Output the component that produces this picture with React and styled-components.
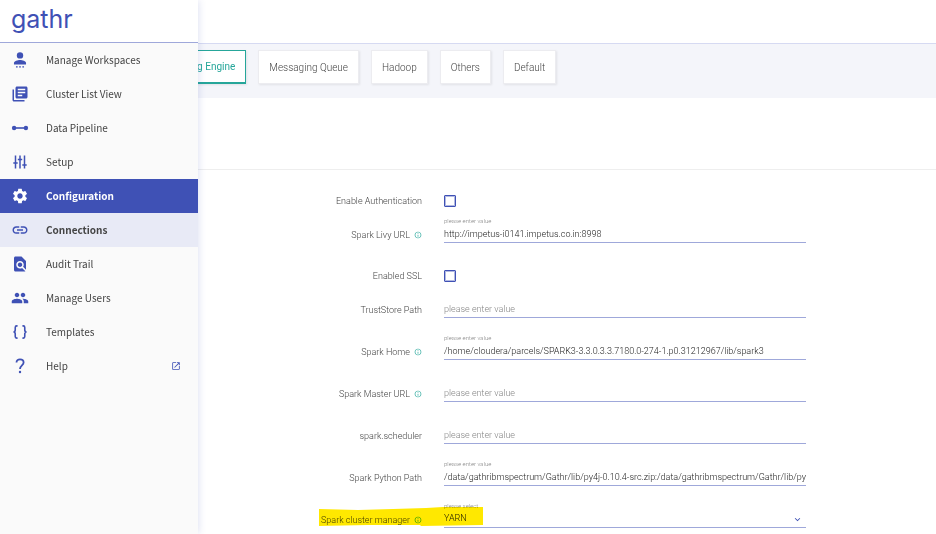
import React, { useState } from 'react';
import styled, { createGlobalStyle, css } from 'styled-components';
import {
  MdSettings,
  MdLink,
  MdFindInPage,
  MdPeople,
  MdLibraryBooks,
  MdOpenInNew,
  MdExpandMore,
  MdOutlineInfo,
} from 'react-icons/md';

const colors = {
  primary: '#3f51b5',
  primaryLight: '#e8eaf6',
  line: '#9fa8da',
  teal: '#26a69a',
  text: '#444444',
  muted: '#858585',
};

const GlobalStyle = createGlobalStyle`
  * {
    box-sizing: border-box;
  }
  body {
    margin: 0;
    background: #ffffff;
    color: ${colors.text};
    font-family: Roboto, "Liberation Sans", sans-serif;
    font-weight: 300;
  }
`;

const Page = styled.div`
  position: relative;
  min-height: 100vh;
`;

/* Side menu, opened over the page */
const Sidebar = styled.aside`
  position: absolute;
  top: 0;
  bottom: 0;
  left: 0;
  z-index: 2;
  width: 198px;
  background: #fafafa;
  box-shadow: 0 0 8px rgba(63, 81, 181, 0.2);
`;

const Brand = styled.div`
  height: 43px;
  padding-left: 11px;
  background: #ffffff;
  border-bottom: 1px solid ${colors.line};
  color: ${colors.primary};
  font-family: Inter, sans-serif;
  font-weight: 400;
  font-size: 25px;
  line-height: 38px;
`;

const Menu = styled.nav`
  display: flex;
  flex-direction: column;
`;

const activeItem = css`
  background: ${colors.primary};
  color: #ffffff;
  font-weight: 700;
`;

const currentItem = css`
  background: ${colors.primaryLight};
  font-weight: 700;
`;

const MenuItem = styled.a`
  display: flex;
  align-items: center;
  gap: 17px;
  height: 34px;
  padding: 0 17px 0 11px;
  color: ${colors.text};
  font-family: "Noto Sans CJK SC", sans-serif;
  font-weight: 400;
  font-size: 10px;
  text-decoration: none;
  ${(props) => props.$state === 'active' && activeItem}
  ${(props) => props.$state === 'current' && currentItem}
`;

const MenuIcon = styled.span`
  display: flex;
  color: ${(props) => (props.$light ? '#ffffff' : colors.primary)};
`;

const MenuText = styled.span`
  flex: 1;
  padding-bottom: 2px;
`;

const Header = styled.header`
  height: 44px;
  border-bottom: 1px solid #d6daf2;
`;

const Tabs = styled.div`
  display: flex;
  gap: 12px;
  height: 54px;
  padding: 6px 0 0 142px;
  background: #f4f5fa;
`;

const Tab = styled.button`
  height: 34px;
  padding: 0 10px;
  background: #ffffff;
  border: 1px solid ${(props) => (props.$active ? colors.teal : '#ececf0')};
  border-bottom-width: ${(props) => (props.$active ? '2px' : '1px')};
  box-shadow: 1px 1px 2px rgba(0, 0, 0, 0.08);
  color: ${(props) => (props.$active ? colors.teal : colors.text)};
  font: inherit;
  font-weight: ${(props) => (props.$active ? 400 : 300)};
  font-size: 10px;
  white-space: nowrap;
`;

const Panel = styled.div`
  height: 72px;
  border-bottom: 1px solid #eeeeee;
`;

const Form = styled.form`
  padding-top: 7px;
`;

const Row = styled.div`
  position: relative;
  display: grid;
  grid-template-columns: 422fr 362fr 108fr;
  column-gap: 22px;
  align-items: end;
  padding: 7px 0 9px;
  &:last-child {
    padding-bottom: 0;
  }
`;

const CheckRow = styled(Row)`
  align-items: center;
  padding: 16px 0 1px;
`;

const Label = styled.label`
  display: flex;
  justify-content: flex-end;
  align-items: center;
  gap: 4px;
  font-size: 9px;
  line-height: 16px;
`;

const Field = styled.div`
  position: relative;
  display: flex;
  flex-direction: column;
  justify-content: flex-end;
  height: 26px;
`;

const Hint = styled.span`
  color: ${colors.muted};
  font-size: 6px;
  line-height: 8px;
`;

const control = css`
  width: 100%;
  height: 18px;
  padding: 0;
  background: transparent;
  border: 0;
  border-bottom: 1px solid ${colors.line};
  border-radius: 0;
  outline: 0;
  color: #222222;
  font: inherit;
  font-size: 9px;
`;

const Input = styled.input`
  ${control}
  &::placeholder {
    color: ${colors.muted};
    opacity: 1;
  }
`;

const Select = styled.select`
  ${control}
  padding-bottom: 2px;
  appearance: none;
`;

const Checkbox = styled.input`
  appearance: none;
  width: 12px;
  height: 12px;
  margin: 0;
  background: #ffffff;
  border: 1px solid ${colors.primary};
  border-radius: 1px;
  box-shadow: inset 0 0 0 1px rgba(63, 81, 181, 0.4);
  &:checked {
    background: ${colors.primary};
  }
`;

const Arrow = styled(MdExpandMore)`
  position: absolute;
  right: 3px;
  bottom: 3px;
  color: ${colors.primary};
  pointer-events: none;
`;

const Marker = styled.svg`
  position: absolute;
  left: 34%;
  bottom: 1px;
  width: 166px;
  height: 21px;
  mix-blend-mode: multiply;
  pointer-events: none;
`;

const WorkspaceIcon = () => (
  <svg width="18" height="18" viewBox="0 0 17 17" fill="currentColor">
    <circle cx="8.5" cy="4.2" r="3" />
    <path d="M2.8 12.7v-1.4c0-2 3.5-2.9 5.7-2.9s5.7.9 5.7 2.9v1.4z" />
    <rect x="4.7" y="14.4" width="1.6" height="1.2" />
    <rect x="7.7" y="14.4" width="1.6" height="1.2" />
    <rect x="10.7" y="14.4" width="1.6" height="1.2" />
  </svg>
);

const PipelineIcon = () => (
  <svg width="18" height="18" viewBox="0 0 18 18" fill="currentColor">
    <circle cx="3.1" cy="9" r="2.2" />
    <circle cx="14.9" cy="9" r="2.2" />
    <rect x="3" y="8.2" width="12" height="1.6" />
  </svg>
);

const SetupIcon = () => (
  <svg width="18" height="18" viewBox="0 0 18 18" fill="none" stroke="currentColor" strokeWidth="1.5">
    <path d="M4.5 2.5v13M9 2.5v13M13.5 2.5v13" />
    <path d="M2.3 10h4.4M6.8 6.5h4.4M11.3 12h4.4" />
  </svg>
);

const BracesIcon = () => (
  <svg width="18" height="18" viewBox="0 0 17 17" fill="none" stroke="currentColor" strokeWidth="1.5">
    <path d="M6.2 2.7H5.4Q4 2.7 4 4.2V6.7Q4 8.5 2.3 8.5Q4 8.5 4 10.3V12.8Q4 14.3 5.4 14.3H6.2" />
    <path d="M10.8 2.7H11.6Q13 2.7 13 4.2V6.7Q13 8.5 14.7 8.5Q13 8.5 13 10.3V12.8Q13 14.3 11.6 14.3H10.8" />
  </svg>
);

const HelpIcon = () => (
  <svg width="18" height="18" viewBox="0 0 18 18" fill="none" stroke="currentColor" strokeWidth="1.8">
    <path d="M5.5 5.6C5.5 3.4 7 2.3 9 2.3S12.6 3.6 12.6 5.5C12.6 8.2 9 8.6 9 12" />
    <circle cx="9" cy="15" r="1.2" fill="currentColor" stroke="none" />
  </svg>
);

const menu = [
  { text: 'Manage Workspaces', icon: <WorkspaceIcon /> },
  { text: 'Cluster List View', icon: <MdLibraryBooks size={18} /> },
  { text: 'Data Pipeline', icon: <PipelineIcon /> },
  { text: 'Setup', icon: <SetupIcon /> },
  { text: 'Configuration', icon: <MdSettings size={18} />, state: 'active' },
  { text: 'Connections', icon: <MdLink size={18} />, state: 'current' },
  { text: 'Audit Trail', icon: <MdFindInPage size={18} /> },
  { text: 'Manage Users', icon: <MdPeople size={18} /> },
  { text: 'Templates', icon: <BracesIcon /> },
  { text: 'Help', icon: <HelpIcon />, external: true },
];

const tabs = ['Processing Engine', 'Messaging Queue', 'Hadoop', 'Others', 'Default'];

const LabelText = ({ id, text, info }) => (
  <Label htmlFor={id}>
    {text}
    {info && <MdOutlineInfo size={8} color={colors.teal} />}
  </Label>
);

const CheckField = ({ id, label }) => (
  <CheckRow>
    <LabelText id={id} text={label} />
    <Checkbox id={id} type="checkbox" />
  </CheckRow>
);

const TextField = ({ id, label, info, initial = '' }) => {
  const [value, setValue] = useState(initial);
  return (
    <Row>
      <LabelText id={id} text={label} info={info} />
      <Field>
        {value && <Hint>please enter value</Hint>}
        <Input
          id={id}
          type="text"
          placeholder="please enter value"
          value={value}
          onChange={(e) => setValue(e.target.value)}
        />
      </Field>
    </Row>
  );
};

const App = () => {
  const [tab, setTab] = useState(tabs[0]);
  return (
    <Page>
      <GlobalStyle />
      <Sidebar>
        <Brand>gathr</Brand>
        <Menu>
          {menu.map((item) => (
            <MenuItem key={item.text} href="#" $state={item.state}>
              <MenuIcon $light={item.state === 'active'}>{item.icon}</MenuIcon>
              <MenuText>{item.text}</MenuText>
              {item.external && <MdOpenInNew size={10} color={colors.primary} />}
            </MenuItem>
          ))}
        </Menu>
      </Sidebar>
      <Header />
      <Tabs>
        {tabs.map((name) => (
          <Tab key={name} type="button" $active={name === tab} onClick={() => setTab(name)}>
            {name}
          </Tab>
        ))}
      </Tabs>
      <Panel />
      <Form>
        <CheckField id="auth" label="Enable Authentication" />
        <TextField id="livy" label="Spark Livy URL" info initial="http://impetus-i0141.impetus.co.in:8998" />
        <CheckField id="ssl" label="Enabled SSL" />
        <TextField id="truststore" label="TrustStore Path" />
        <TextField
          id="home"
          label="Spark Home"
          info
          initial="/home/cloudera/parcels/SPARK3-3.3.0.3.3.7180.0-274-1.p0.31212967/lib/spark3"
        />
        <TextField id="master" label="Spark Master URL" info />
        <TextField id="scheduler" label="spark.scheduler" />
        <TextField
          id="python"
          label="Spark Python Path"
          initial="/data/gathribmspectrum/Gathr/lib/py4j-0.10.4-src.zip:/data/gathribmspectrum/Gathr/lib/pyspark.zip"
        />
        <Row>
          <LabelText id="manager" text="Spark cluster manager" info />
          <Field>
            <Hint>please select</Hint>
            <Select id="manager" defaultValue="YARN">
              <option>YARN</option>
            </Select>
            <Arrow size={11} />
          </Field>
          <Marker viewBox="0 0 166 21">
            <path fill="#ffe800" d="M1 3L40 4L75 3L108 2L125 1L165 1V19L103 20L102 19L50 19L1 20Z" />
          </Marker>
        </Row>
      </Form>
    </Page>
  );
};

export default App;
